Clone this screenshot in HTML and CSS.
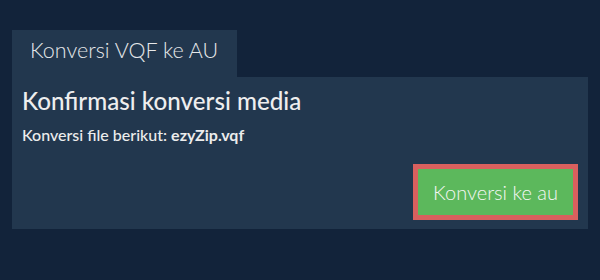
FILE: index.html
```html
<!DOCTYPE html>
<html lang="id">
<head>
<meta charset="utf-8">
<title>Konversi VQF ke AU</title>
<link rel="stylesheet" href="styles.css">
</head>
<body>
<div class="wrap">
  <div class="tab">Konversi VQF ke AU</div>
  <div class="panel">
    <h1 class="title">Konfirmasi konversi media</h1>
    <p class="info">Konversi file berikut: <b class="fname">ezyZip.vqf</b></p>
    <div class="actions">
      <button class="btn">Konversi ke au</button>
    </div>
  </div>
</div>
</body>
</html>
```

FILE: styles.css
```css
html, body {
  margin: 0;
  padding: 0;
  background: #12233a;
  font-family: Lato, "Open Sans", sans-serif;
  color: #ececec;
}
.wrap {
  padding: 30px 12px 0 12px;
}
.tab {
  width: 207px;
  height: 40px;
  padding: 7px 0 0 18px;
  background: #22374e;
  font-size: 21.5px;
  font-weight: 300;
  line-height: 26px;
  color: #e6e8ea;
}
.panel {
  background: #22374e;
  padding: 10px 10px 9px 10px;
}
.title {
  margin: 0;
  font-size: 24.2px;
  font-weight: 500;
  line-height: 28px;
  color: #eeeeee;
}
.info {
  margin: 10px 0 0 0;
  font-size: 16px;
  font-weight: 500;
  line-height: 20px;
}
.fname {
  font-weight: 700;
}
.actions {
  display: flex;
  justify-content: flex-end;
  margin-top: 19px;
}
.btn {
  box-sizing: border-box;
  height: 56px;
  width: 165px;
  border: 5px solid #d9605e;
  background: #5cb85c;
  color: #f4f7f4;
  font-family: Lato, "Open Sans", sans-serif;
  font-size: 20px;
  font-weight: 300;
  line-height: 24px;
  padding: 0;
}
```
